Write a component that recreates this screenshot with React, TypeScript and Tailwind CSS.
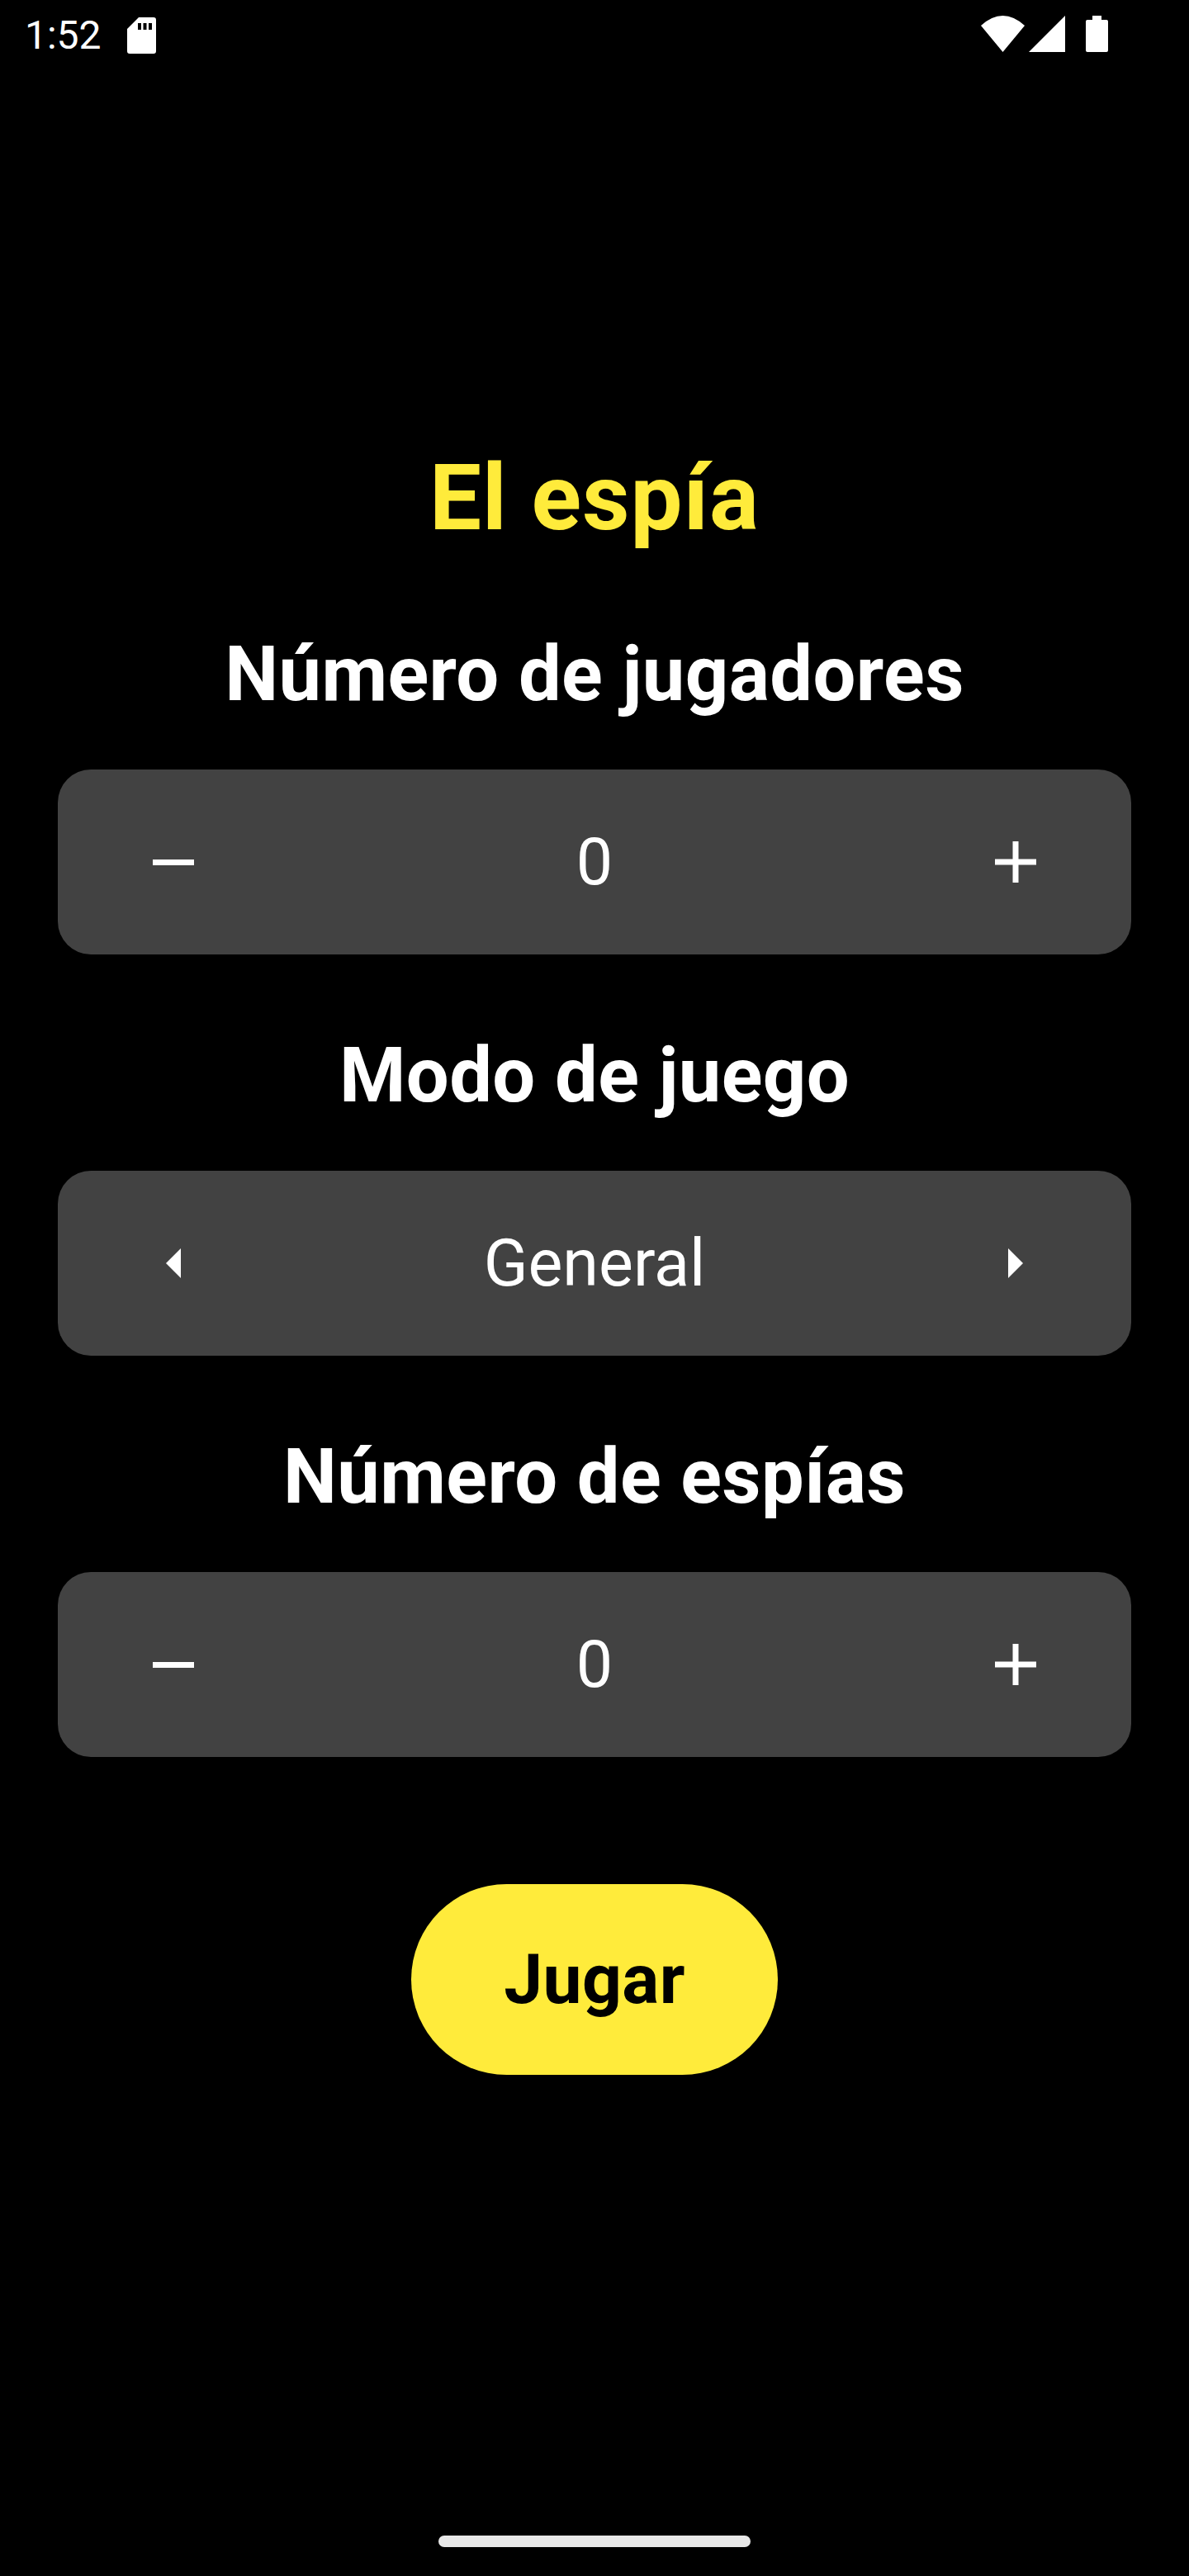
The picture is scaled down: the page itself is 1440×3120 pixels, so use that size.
function MinusIcon() {
  return <div className="w-[50px] h-[7px] bg-white" />;
}

function PlusIcon() {
  return (
    <svg width="50" height="50" viewBox="0 0 50 50" fill="#fff">
      <rect x="0" y="21.5" width="50" height="7" />
      <rect x="21.5" y="0" width="7" height="50" />
    </svg>
  );
}

function Caret({ dir }: { dir: 'left' | 'right' }) {
  return (
    <svg width="18" height="36" viewBox="0 0 18 36" fill="#fff">
      <path d={dir === 'left' ? 'M18 0 L0 18 L18 36 Z' : 'M0 0 L18 18 L0 36 Z'} />
    </svg>
  );
}

function Stepper({ left, right, value }: { left: React.ReactNode; right: React.ReactNode; value: string }) {
  return (
    <div className="flex items-center h-[224px] rounded-[40px] bg-[#424242]">
      <div className="flex w-[280px] h-full items-center justify-center">{left}</div>
      <div className="flex-1 text-center text-white text-[79px] leading-[93px]">{value}</div>
      <div className="flex w-[280px] h-full items-center justify-center">{right}</div>
    </div>
  );
}

function Section({ title, children }: { title: string; children: React.ReactNode }) {
  return (
    <section className="flex flex-col">
      <h2 className="h-[108px] mb-[61px] text-center text-white font-bold text-[92px] leading-[108px] tracking-[0.4px]">{title}</h2>
      {children}
    </section>
  );
}

export default function App() {
  return (
    <div className="relative w-[1440px] h-[3120px] overflow-hidden bg-black font-['Roboto',sans-serif]">
      {/* status bar */}
      <div className="flex h-[84px] items-start justify-between pl-[30px] pr-[98px] pt-[19px] text-white">
        <div className="flex items-center">
          <span className="text-[48px] leading-[48px]">1:52</span>
          <svg className="ml-[31px]" width="35" height="44" viewBox="0 0 35 44" fill="#fff">
            <path fillRule="evenodd" d="M14 0H32a3 3 0 0 1 3 3V41a3 3 0 0 1-3 3H3a3 3 0 0 1-3-3V14Z M13 7V15H17V7Z M19.5 7V15H23.5V7Z M26 7V15H30V7Z" />
          </svg>
        </div>
        <div className="flex items-start">
          <svg width="53" height="44" viewBox="0 0 53 44" fill="#fff">
            <path d="M0 12 Q26.5 -12 53 12 L26.5 44 Z" />
          </svg>
          <svg className="ml-[5px]" width="44" height="44" viewBox="0 0 44 44" fill="#fff">
            <path d="M44 0V44H0Z" />
          </svg>
          <svg className="ml-[25px]" width="27" height="44" viewBox="0 0 27 44" fill="#fff">
            <path d="M8 0H19V5H25a2 2 0 0 1 2 2V42a2 2 0 0 1-2 2H2a2 2 0 0 1-2-2V7a2 2 0 0 1 2-2H8Z" />
          </svg>
        </div>
      </div>

      <main className="flex flex-col px-[70px] pt-[453px]">
        <h1 className="h-[131px] mb-[95px] text-center text-[#ffeb3b] font-bold text-[112px] leading-[131px] tracking-[1px]">El espía</h1>
        <div className="flex flex-col gap-[93px]">
          <Section title="Número de jugadores">
            <Stepper left={<MinusIcon />} right={<PlusIcon />} value="0" />
          </Section>
          <Section title="Modo de juego">
            <Stepper left={<Caret dir="left" />} right={<Caret dir="right" />} value="General" />
          </Section>
          <Section title="Número de espías">
            <Stepper left={<MinusIcon />} right={<PlusIcon />} value="0" />
          </Section>
        </div>
        <button className="self-center mt-[154px] flex h-[231px] w-[444px] items-center justify-center rounded-full bg-[#ffeb3b] text-black font-bold text-[84px] leading-[98px] tracking-[0.4px]">
          Jugar
        </button>
      </main>

      {/* gesture pill */}
      <div className="absolute bottom-[35px] left-[531px] h-[14px] w-[378px] rounded-full bg-[#e8e8e8]" />
    </div>
  );
}
